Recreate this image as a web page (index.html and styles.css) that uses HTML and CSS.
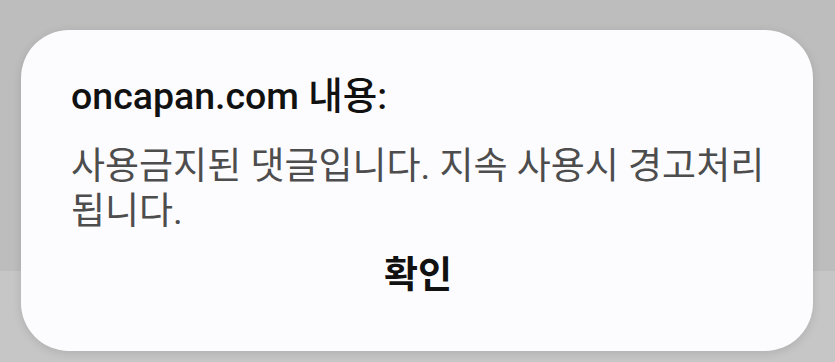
FILE: index.html
```html
<!DOCTYPE html>
<html lang="ko">
<head>
    <meta charset="UTF-8">
    <title>oncapan.com 내용</title>
    <link rel="stylesheet" href="styles.css">
</head>
<body>
    <div class="dialogo">
        <div class="titulo">oncapan.com 내용:</div>
        <div class="mensagem">사용금지된 댓글입니다. 지속 사용시 경고처리 됩니다.</div>
        <div class="acoes">
            <button class="botao">확인</button>
        </div>
    </div>
</body>
</html>
```
FILE: styles.css
```css
html, body{
    margin: 0;
    height: 100%;
}

body{
    background: linear-gradient(#bdbdbd 0, #bdbdbd 271px, #c6c6c6 271px);
    font-family: Roboto, "Noto Sans CJK KR", sans-serif;
    padding: 30px 22px 0 21px;
    box-sizing: border-box;
}

.dialogo{
    background-color: #fcfcfe;
    border-radius: 48px;
    height: 321px;
    box-sizing: border-box;
    padding: 44px 48px 0 50px;
    box-shadow: 0 2px 10px rgba(0, 0, 0, 0.12);
}

.titulo{
    font-size: 37.5px;
    font-weight: 500;
    color: #111;
    line-height: 44px;
}

.mensagem{
    font-size: 37px;
    color: #4d4d4d;
    line-height: 45px;
    margin-top: 26px;
}

.acoes{
    display: flex;
    justify-content: center;
    margin-top: 20px;
}

.botao{
    border: none;
    background: none;
    padding: 0;
    font-family: Roboto, "Noto Sans CJK KR", sans-serif;
    font-size: 37px;
    font-weight: 700;
    line-height: 44px;
    color: #111;
    cursor: pointer;
}
```
